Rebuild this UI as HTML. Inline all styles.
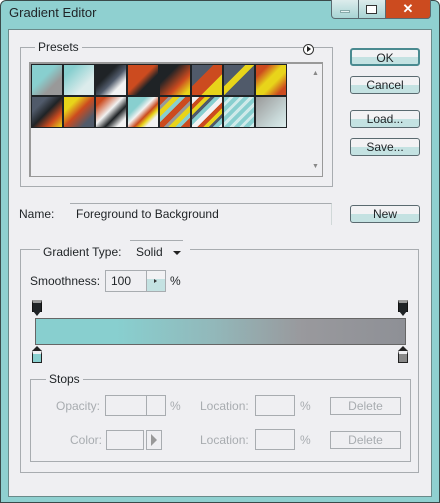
<!DOCTYPE html>
<html><head><style>
*{box-sizing:border-box;margin:0;padding:0}
body{width:440px;height:503px;background:#fff;font-family:"Liberation Sans",sans-serif;font-size:12px;color:#1f2326;position:relative;overflow:hidden}
.abs{position:absolute}
.frame{left:0;top:0;width:440px;height:503px;background:#8fd0d0;border:1px solid #3a4a4a;border-radius:6px 6px 0 0}
.client{left:8px;top:29px;width:424px;height:468px;background:#efeff2;border:1px solid #6a8a8a}
.btn{position:absolute;left:350px;width:70px;height:18px;border:1px solid #5a6a70;border-radius:3px;background:linear-gradient(#f2f2f4 50%,#c4e2e2 50%);text-align:center;font-size:12px;line-height:16px}
.grp{position:absolute;border:1px solid #a8acb0}
.lbl{position:absolute;background:#efeff2;padding:0 3px}
.sw{position:absolute;width:32px;height:32px;border:1px solid #1f2326}
.dis{color:#a8acb0}
.fld{position:absolute;border:1px solid #a8acb0;background:#efeff2}
</style></head><body>
<div class="abs frame"></div>
<div class="abs" style="left:9px;top:5px;font-size:13px">Gradient Editor</div>
<div class="abs" style="left:331px;top:0;width:100px;height:19px;border:1px solid #5a6a70;border-top:0;border-radius:0 0 4px 4px;background:linear-gradient(#dcecec,#a8d4d4)"></div>
<div class="abs" style="left:358px;top:0;width:1px;height:19px;background:#5a6a70"></div>
<div class="abs" style="left:385px;top:0;width:46px;height:19px;background:#cc4b1f;border-radius:0 0 4px 0;border:1px solid #5a6a70;border-top:0;color:#fff;text-align:center;font-weight:bold;font-size:13px;line-height:18px">✕</div>
<div class="abs" style="left:340px;top:10px;width:10px;height:3px;background:#e8f4f4;border:1px solid #8aa"></div>
<div class="abs" style="left:366px;top:5px;width:11px;height:9px;border:1px solid #333;background:#fff"></div>
<div class="abs client"></div>

<div class="grp" style="left:20px;top:47px;width:313px;height:140px"></div>
<div class="lbl" style="left:35px;top:40px">Presets</div>
<div class="abs" style="left:303px;top:44px;width:11px;height:11px;border:1px solid #333;border-radius:50%;background:#fff"></div>
<div class="abs" style="left:307px;top:46px;width:0;height:0;border-left:4px solid #222;border-top:3px solid transparent;border-bottom:3px solid transparent"></div>
<div class="abs" style="left:29px;top:62px;width:294px;height:115px;border:1px solid #999;border-top:2px solid #999;border-left:2px solid #999"></div>
<div class="abs" style="left:312px;top:70px;color:#888;font-size:7px">▲</div>
<div class="abs" style="left:312px;top:163px;color:#888;font-size:7px">▼</div>

<div class="sw" style="left:31px;top:64px;background:linear-gradient(135deg,#88cfcf 40%,#999 70%)"></div>
<div class="sw" style="left:63px;top:64px;background:linear-gradient(135deg,#88cfcf 20%,#dcecec 70%)"></div>
<div class="sw" style="left:95px;top:64px;background:linear-gradient(135deg,#1f2326 35%,#505a6a 55%,#f2f2f2 75%)"></div>
<div class="sw" style="left:127px;top:64px;background:linear-gradient(135deg,#cc4b1f 45%,#1f2326 65%)"></div>
<div class="sw" style="left:159px;top:64px;background:linear-gradient(135deg,#1f2326 30%,#cc4b1f 65%,#e8d41a 90%)"></div>
<div class="sw" style="left:191px;top:64px;background:linear-gradient(135deg,#505a6a 35%,#cc4b1f 36%,#cc4b1f 65%,#e8d41a 66%)"></div>
<div class="sw" style="left:223px;top:64px;background:linear-gradient(135deg,#505a6a 35%,#e8d41a 36%,#e8d41a 50%,#505a6a 51%)"></div>
<div class="sw" style="left:255px;top:64px;background:linear-gradient(135deg,#cc4b1f 20%,#e8d41a 45%,#e8d41a 60%,#cc4b1f 85%)"></div>
<div class="sw" style="left:31px;top:96px;background:linear-gradient(135deg,#505a6a 25%,#1f2326 50%,#cc4b1f 75%,#e8d41a)"></div>
<div class="sw" style="left:63px;top:96px;background:linear-gradient(135deg,#e8d41a 25%,#cc4b1f 50%,#505a6a 80%)"></div>
<div class="sw" style="left:95px;top:96px;background:linear-gradient(135deg,#cc4b1f 15%,#f2f2f2 45%,#1f2326 65%,#f2f2f2 85%)"></div>
<div class="sw" style="left:127px;top:96px;background:linear-gradient(135deg,#88cfcf 30%,#f2f2f2 45%,#cc4b1f 60%,#e8d41a 70%,#f2f2f2 80%)"></div>
<div class="sw" style="left:159px;top:96px;background:repeating-linear-gradient(135deg,#cc4b1f 0 6px,#999 6px 9px,#e8d41a 9px 14px,#88cfcf 14px 18px)"></div>
<div class="sw" style="left:191px;top:96px;background:repeating-linear-gradient(135deg,#f2f2f2 0 5px,#cc4b1f 5px 9px,#e8d41a 9px 13px,#505a6a 13px 16px,#88cfcf 16px 20px)"></div>
<div class="sw" style="left:223px;top:96px;background:repeating-linear-gradient(135deg,#88cfcf 0 4px,#cfeaea 4px 7px)"></div>
<div class="sw" style="left:255px;top:96px;background:linear-gradient(135deg,#999,#c8d8d8 70%,#dcecec)"></div>

<div class="btn" style="top:48px;border:2px solid #4a8a90">OK</div>
<div class="btn" style="top:76px">Cancel</div>
<div class="btn" style="top:110px">Load...</div>
<div class="btn" style="top:138px">Save...</div>
<div class="btn" style="top:205px">New</div>

<div class="abs" style="left:19px;top:207px">Name:</div>
<div class="abs" style="left:70px;top:203px;width:262px;height:22px;border-top:1px solid #a8acb0;border-right:1px solid #d0d8d8"></div>
<div class="abs" style="left:76px;top:207px">Foreground to Background</div>

<div class="grp" style="left:20px;top:249px;width:399px;height:224px"></div>
<div class="lbl" style="left:40px;top:244px;width:150px;height:14px"></div>
<div class="abs" style="left:43px;top:245px">Gradient Type:</div>
<div class="abs" style="left:130px;top:240px;width:53px;height:20px;border-top:1px solid #a8acb0"></div>
<div class="abs" style="left:136px;top:245px">Solid</div>
<div class="abs" style="left:173px;top:251px;border-top:4px solid #222;border-left:4px solid transparent;border-right:4px solid transparent"></div>

<div class="abs" style="left:30px;top:274px">Smoothness:</div>
<div class="fld" style="left:105px;top:270px;width:61px;height:22px"></div>
<div class="abs" style="left:111px;top:274px">100</div>
<div class="abs" style="left:146px;top:271px;width:19px;height:20px;background:linear-gradient(#f2f2f4 40%,#c4e2e2 40%);border-left:1px solid #a8acb0"></div>
<div class="abs" style="left:154px;top:279px;border-left:3px solid #333;border-top:2px solid transparent;border-bottom:2px solid transparent"></div>
<div class="abs" style="left:170px;top:274px">%</div>

<div class="abs" style="left:32px;top:300px;width:10px;height:12px;background:#1f2326;border:1px solid #111;border-top:3px solid #999"></div>
<div class="abs" style="left:33px;top:311px;border-top:5px solid #1f2326;border-left:4px solid transparent;border-right:4px solid transparent"></div>
<div class="abs" style="left:398px;top:300px;width:10px;height:12px;background:#1f2326;border:1px solid #111;border-top:3px solid #999"></div>
<div class="abs" style="left:399px;top:311px;border-top:5px solid #1f2326;border-left:4px solid transparent;border-right:4px solid transparent"></div>
<div class="abs" style="left:35px;top:318px;width:371px;height:27px;border:1px solid #666;background:linear-gradient(90deg,#88cfcf 22%,#92b8ba 48%,#99999d 72%,#8e9096 100%)"></div>
<div class="abs" style="left:32px;top:350px;width:10px;height:13px;background:#88cfcf;border:1px solid #222;border-top:4px solid #efeff2"></div>
<div class="abs" style="left:32px;top:346px;border-bottom:5px solid #222;border-left:5px solid transparent;border-right:5px solid transparent"></div>
<div class="abs" style="left:398px;top:350px;width:10px;height:13px;background:#888;border:1px solid #222;border-top:4px solid #efeff2"></div>
<div class="abs" style="left:398px;top:346px;border-bottom:5px solid #222;border-left:5px solid transparent;border-right:5px solid transparent"></div>

<div class="grp" style="left:30px;top:379px;width:381px;height:83px"></div>
<div class="lbl" style="left:46px;top:372px">Stops</div>
<div class="abs dis" style="left:56px;top:399px">Opacity:</div>
<div class="fld" style="left:105px;top:395px;width:61px;height:21px"></div>
<div class="abs" style="left:146px;top:396px;width:1px;height:19px;background:#a8acb0"></div>
<div class="abs dis" style="left:170px;top:399px">%</div>
<div class="abs dis" style="left:200px;top:399px">Location:</div>
<div class="fld" style="left:255px;top:395px;width:40px;height:21px"></div>
<div class="abs dis" style="left:300px;top:399px">%</div>
<div class="fld" style="left:330px;top:397px;width:71px;height:18px;text-align:center;line-height:16px;color:#a8acb0">Delete</div>
<div class="abs dis" style="left:70px;top:433px">Color:</div>
<div class="fld" style="left:106px;top:430px;width:38px;height:20px"></div>
<div class="fld" style="left:146px;top:430px;width:16px;height:20px"></div>
<div class="abs" style="left:151px;top:434px;border-left:6px solid #999;border-top:6px solid transparent;border-bottom:6px solid transparent"></div>
<div class="abs dis" style="left:200px;top:433px">Location:</div>
<div class="fld" style="left:255px;top:429px;width:40px;height:21px"></div>
<div class="abs dis" style="left:300px;top:433px">%</div>
<div class="fld" style="left:330px;top:431px;width:71px;height:18px;text-align:center;line-height:16px;color:#a8acb0">Delete</div>
</body></html>
